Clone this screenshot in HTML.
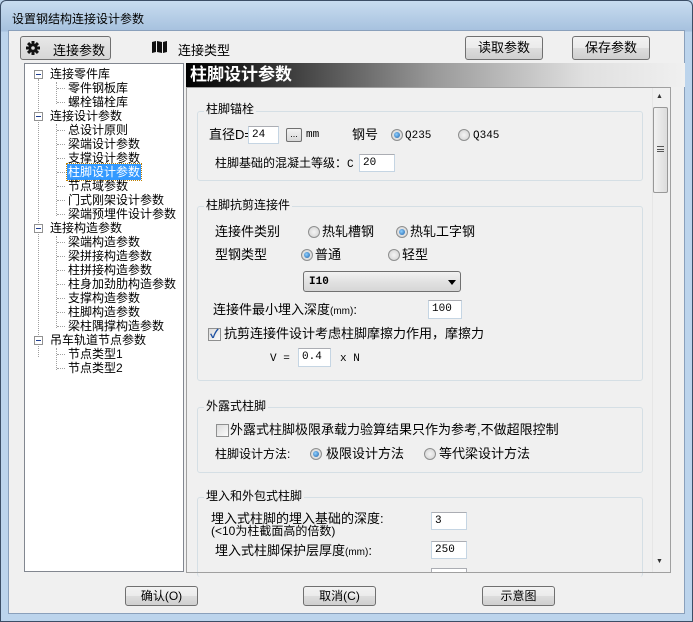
<!DOCTYPE html>
<html><head><meta charset="utf-8">
<style>
*{margin:0;padding:0;box-sizing:border-box}
body{width:693px;height:622px;overflow:hidden;background:#bcd4ec;font-family:"Liberation Sans","Noto Sans CJK SC","WenQuanYi Zen Hei",sans-serif;font-size:12px;color:#000;position:relative}
.a{position:absolute;white-space:nowrap}
.frame{left:0;top:0;width:693px;height:622px;border:1px solid #3c4e66;border-radius:6px 6px 0 0;background:linear-gradient(#c8dcf0,#a6c1de 30px,#bcd4ec 31px)}
.client{left:8px;top:30px;width:677px;height:584px;background:#f0f0f0;border:1px solid #8aa0bb}
.btn{border:1px solid #707070;border-radius:3px;background:linear-gradient(#f2f2f2,#ebebeb 50%,#dddddd 51%,#cfcfcf);text-align:center;font-size:12px}
.tree{left:24px;top:63px;width:160px;height:509px;background:#fff;border:1px solid #828790}
.ti{position:absolute;font-size:12px;line-height:14px;white-space:nowrap}
.exp{position:absolute;width:9px;height:9px;border:1px solid #919191;background:#fff}
.exp:after{content:"";position:absolute;left:1px;top:3px;width:5px;height:1px;background:#1e3d8f}
.vl{position:absolute;border-left:1px dotted #a0a0a0}
.hl{position:absolute;border-top:1px dotted #a0a0a0;width:8px}
.grp{position:absolute;border:1px solid #d5dfe5;border-radius:3px}
.gl{position:absolute;background:#f0f0f0;padding:0 2px;font-size:12px;line-height:14px}
.inp{position:absolute;background:#fff;border:1px solid #c5d5e3;border-top-color:#abadb3;font-size:11px;font-family:"Liberation Mono",monospace;padding:1px 3px;line-height:14px}
.rb{position:absolute;width:12px;height:12px;border-radius:50%;border:1px solid #8e8f8f;background:radial-gradient(#f4f4f4,#d0d0d0)}
.rb.on:after{content:"";position:absolute;left:2px;top:2px;width:6px;height:6px;border-radius:50%;background:radial-gradient(circle at 40% 40%,#8fd0ff,#1b5fa8)}
.cb{position:absolute;width:13px;height:13px;border:1px solid #8e8f8f;background:linear-gradient(135deg,#dcdcdc,#fbfbfb)}
.t{position:absolute;white-space:nowrap;line-height:14px}
.m{font-family:"Liberation Mono",monospace;font-size:11px}
</style></head><body>
<div class="a frame"></div>
<div class="a" style="left:12px;top:10px;font-size:12px">设置钢结构连接设计参数</div>
<div class="a client"></div>

<div class="a" style="left:20px;top:36px;width:91px;height:24px;border:1px solid #707070;border-radius:3px;background:linear-gradient(#e8e8e8,#d6d6d6)"></div>
<svg class="a" style="left:26px;top:41px" width="14" height="14" viewBox="0 0 14 14"><g fill="#111"><circle cx="7" cy="7" r="4.5"/><rect x="5.5" y="0" width="3" height="14"/><rect x="0" y="5.5" width="14" height="3"/><rect x="5.5" y="0" width="3" height="14" transform="rotate(45 7 7)"/><rect x="5.5" y="0" width="3" height="14" transform="rotate(-45 7 7)"/></g><circle cx="7" cy="7" r="1.8" fill="#ddd"/></svg>
<div class="a" style="left:53px;top:40px;font-size:13px">连接参数</div>
<svg class="a" style="left:152px;top:41px" width="15" height="12" viewBox="0 0 15 12"><path d="M0 1L4 0L4 11L0 12Z M5 0L10 1L10 12L5 11Z M11 1L15 0L15 11L11 12Z" fill="#111"/></svg>
<div class="a" style="left:178px;top:40px;font-size:13px">连接类型</div>
<div class="a btn" style="left:465px;top:36px;width:78px;height:24px;line-height:22px;font-size:13px">读取参数</div>
<div class="a btn" style="left:572px;top:36px;width:78px;height:24px;line-height:22px;font-size:13px">保存参数</div>

<div class="a tree"></div>
<div class="a" style="left:24px;top:63px;width:160px;height:509px">
<div class="vl" style="left:14px;top:16px;height:278px"></div>
<div class="vl" style="left:32px;top:19px;height:22px"></div>
<div class="vl" style="left:32px;top:61px;height:92px"></div>
<div class="vl" style="left:32px;top:173px;height:92px"></div>
<div class="vl" style="left:32px;top:285px;height:22px"></div>
</div>
<div id="tree"></div>
<script>
var items=[[0,"连接零件库"],[1,"零件钢板库"],[1,"螺栓锚栓库"],[0,"连接设计参数"],[1,"总设计原则"],[1,"梁端设计参数"],[1,"支撑设计参数"],[2,"柱脚设计参数"],[1,"节点域参数"],[1,"门式刚架设计参数"],[1,"梁端预埋件设计参数"],[0,"连接构造参数"],[1,"梁端构造参数"],[1,"梁拼接构造参数"],[1,"柱拼接构造参数"],[1,"柱身加劲肋构造参数"],[1,"支撑构造参数"],[1,"柱脚构造参数"],[1,"梁柱隅撑构造参数"],[0,"吊车轨道节点参数"],[1,"节点类型1"],[1,"节点类型2"]];
var h="";
items.forEach(function(it,i){var y=67+i*14;
if(it[0]==0){h+='<div class="exp" style="left:34px;top:'+(y+3)+'px"></div><div class="ti" style="left:50px;top:'+y+'px">'+it[1]+'</div>';}
else{h+='<div class="hl" style="left:57px;top:'+(y+7)+'px"></div>';
if(it[0]==2)h+='<div class="ti" style="left:67px;top:'+(y-1)+'px;background:#3399ff;color:#fff;outline:1px dotted #c08000;padding:1px 1px">'+it[1]+'</div>';
else h+='<div class="ti" style="left:68px;top:'+y+'px">'+it[1]+'</div>';}
});
document.getElementById("tree").innerHTML=h;
</script>

<div class="a" style="left:186px;top:63px;width:499px;height:24px;background:linear-gradient(90deg,#000 0%,#3a3a3a 20%,#9a9a9a 50%,#e0e0e0 80%,#f0f0f0 100%)"></div>
<div class="a" style="left:190px;top:64px;color:#fff;font-size:17px;font-weight:bold;line-height:22px">柱脚设计参数</div>

<div class="a" style="left:186px;top:87px;width:485px;height:486px;border:1px solid #a0a0a0;background:#f0f0f0"></div>
<div class="a" style="left:652px;top:88px;width:18px;height:484px;background:#f0f0f0;border-left:1px solid #e6e6e6"></div>
<div class="a" style="left:656px;top:93px;font-size:7px;color:#333">▲</div>
<div class="a" style="left:653px;top:107px;width:15px;height:86px;border:1px solid #989898;border-radius:2px;background:linear-gradient(90deg,#f2f2f2,#dcdcdc)"></div>
<div class="a" style="left:657px;top:146px;width:7px;height:6px;border-top:1px solid #555;border-bottom:1px solid #555"></div>
<div class="a" style="left:657px;top:149px;width:7px;height:1px;background:#555"></div>
<div class="a" style="left:656px;top:558px;font-size:7px;color:#333">▼</div>

<div class="grp" style="left:197px;top:111px;width:446px;height:70px"></div>
<div class="gl" style="left:204px;top:102px">柱脚锚栓</div>
<div class="t" style="left:209px;top:128px;font-size:13px">直径D=</div>
<div class="inp" style="left:248px;top:126px;width:31px;height:18px">24</div>
<div class="a" style="left:286px;top:128px;width:16px;height:14px;border:1px solid #707070;border-radius:2px;background:linear-gradient(#f2f2f2,#d8d8d8);font-size:9px;text-align:center;line-height:10px">...</div>
<div class="t m" style="left:306px;top:128px">mm</div>
<div class="t" style="left:352px;top:128px;font-size:13px">钢号</div>
<div class="rb on" style="left:391px;top:129px"></div><div class="t m" style="left:405px;top:129px">Q235</div>
<div class="rb" style="left:458px;top:129px"></div><div class="t m" style="left:473px;top:129px">Q345</div>
<div class="t" style="left:215px;top:156px">柱脚基础的混凝土等级：<span class="m">C</span></div>
<div class="inp" style="left:359px;top:154px;width:36px;height:18px">20</div>

<div class="grp" style="left:197px;top:206px;width:446px;height:175px"></div>
<div class="gl" style="left:204px;top:198px">柱脚抗剪连接件</div>
<div class="t" style="left:215px;top:225px;font-size:13px">连接件类别</div>
<div class="rb" style="left:308px;top:226px"></div><div class="t" style="left:322px;top:225px;font-size:13px">热轧槽钢</div>
<div class="rb on" style="left:396px;top:226px"></div><div class="t" style="left:410px;top:225px;font-size:13px">热轧工字钢</div>
<div class="t" style="left:215px;top:248px;font-size:13px">型钢类型</div>
<div class="rb on" style="left:301px;top:249px"></div><div class="t" style="left:315px;top:248px;font-size:13px">普通</div>
<div class="rb" style="left:388px;top:249px"></div><div class="t" style="left:402px;top:248px;font-size:13px">轻型</div>
<div class="a" style="left:303px;top:271px;width:158px;height:21px;border:1px solid #707070;border-radius:3px;background:linear-gradient(#f2f2f2,#e2e2e2 50%,#d6d6d6)"></div>
<div class="t m" style="left:309px;top:275px;font-weight:bold">I10</div>
<div class="a" style="left:448px;top:280px;width:0;height:0;border-left:4px solid transparent;border-right:4px solid transparent;border-top:5px solid #000"></div>
<div class="t" style="left:213px;top:303px;font-size:13px">连接件最小埋入深度<span style="font-size:10px">(mm)</span>:</div>
<div class="inp" style="left:428px;top:300px;width:34px;height:19px">100</div>
<div class="cb" style="left:208px;top:328px"></div>
<div class="a" style="left:210px;top:325px;color:#1c4fa0;font-size:12px;font-weight:bold">✓</div>
<div class="t" style="left:224px;top:327px;font-size:13px">抗剪连接件设计考虑柱脚摩擦力作用，摩擦力</div>
<div class="t m" style="left:270px;top:352px">V =</div>
<div class="inp" style="left:298px;top:348px;width:33px;height:19px">0.4</div>
<div class="t m" style="left:340px;top:352px">x N</div>

<div class="grp" style="left:197px;top:407px;width:446px;height:66px"></div>
<div class="gl" style="left:204px;top:399px">外露式柱脚</div>
<div class="cb" style="left:216px;top:424px"></div>
<div class="t" style="left:230px;top:423px;font-size:13px">外露式柱脚极限承载力验算结果只作为参考,不做超限控制</div>
<div class="t" style="left:215px;top:447px">柱脚设计方法:</div>
<div class="rb on" style="left:310px;top:448px"></div><div class="t" style="left:326px;top:447px;font-size:13px">极限设计方法</div>
<div class="rb" style="left:424px;top:448px"></div><div class="t" style="left:439px;top:447px;font-size:13px">等代梁设计方法</div>

<div class="grp" style="left:197px;top:497px;width:446px;height:80px;border-bottom:none"></div>
<div class="gl" style="left:204px;top:489px">埋入和外包式柱脚</div>
<div class="t" style="left:211px;top:513px;font-size:13px;line-height:12px">埋入式柱脚的埋入基础的深度:</div>
<div class="t" style="left:211px;top:526px;font-size:12px;line-height:11px">(&lt;10为柱截面高的倍数)</div>
<div class="inp" style="left:431px;top:512px;width:36px;height:18px">3</div>
<div class="t" style="left:215px;top:544px;font-size:13px">埋入式柱脚保护层厚度<span style="font-size:10px">(mm)</span>:</div>
<div class="inp" style="left:431px;top:541px;width:36px;height:18px">250</div>
<div class="a" style="left:431px;top:568px;width:36px;height:4px;background:#fff;border:1px solid #abadb3;border-bottom:none"></div>
<div class="a" style="left:187px;top:572px;width:484px;height:1px;background:#a0a0a0"></div>

<div class="a btn" style="left:125px;top:586px;width:73px;height:20px;line-height:18px">确认(O)</div>
<div class="a btn" style="left:303px;top:586px;width:73px;height:20px;line-height:18px">取消(C)</div>
<div class="a btn" style="left:482px;top:586px;width:73px;height:20px;line-height:18px">示意图</div>
</body></html>
